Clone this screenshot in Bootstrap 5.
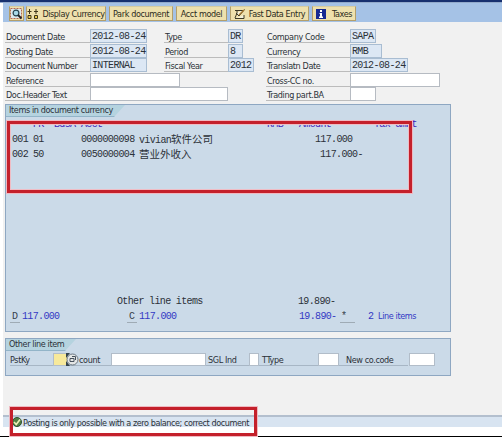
<!DOCTYPE html>
<html lang="en">
<head>
<meta charset="utf-8">
<title>Display Overview</title>
<link href="https://cdn.jsdelivr.net/npm/bootstrap@5.3.0/dist/css/bootstrap.min.css" rel="stylesheet">
<style>
body{width:502px;height:438px;overflow:hidden;background:#fff;color:#2b3138;font:9px/13px "DejaVu Sans Condensed","DejaVu Sans",Tahoma,sans-serif;font-stretch:condensed;letter-spacing:-.38px;white-space:nowrap}
svg{flex:none}
.screen{margin-left:3px;height:424px;background:#f1f1f1}
.topline{height:3px;background:#17306f;border-bottom:1px solid #93aacb}
.toolbar{height:19px;background:#a5c2e6;padding:3px 0 1px 6px}
.tool{height:15px;padding:0 3px;border:1px solid #b39f6b;border-top-color:#d6cca0;border-radius:0;background:#eee0ad;color:#2b2b20;font-size:inherit;line-height:12px;letter-spacing:inherit;margin-right:3px;display:flex;align-items:center;justify-content:center;flex:none}
.tool svg{margin-right:3px}
.pick{width:15px;padding:0;margin-right:2px}
.pick svg{margin:0}
.w-cur{width:80px;letter-spacing:-.42px}.w-park{width:64px}.w-acct{width:51px}.w-fast{width:79px}.w-tax{width:44px}
.w-tax svg{margin-right:6px}
.head-fields{padding:7px 0 0 2px}
.line{height:14.6px;display:grid;grid-template-columns:85px 74px 64px 38px 84px 1fr}
.lbl{height:14px;padding:2px 0 0 1px;border-bottom:1px solid #bcbcbc}
.fld{height:14px;background:#fff;border:1px solid #b6bbc2}
.ro{background:#dce7f4;border-color:#a9bdd2}
.mono{font-family:"Liberation Mono","Noto Sans CJK SC",monospace;font-size:10px;letter-spacing:-.65px;line-height:13px}
.ro.mono{padding-left:1px}
.w10{width:10px}.w15{width:15px}.w21{width:21px}.w26{width:26px}.w32{width:32px}.w57{width:57px}.w58{width:58px}.w90{width:90px}.w95{width:95px}.w138{width:138px}
.panel{margin-left:2px;width:446px;background:#cbdae8;border:1px solid #8ea7c2}
.caption{height:12px;line-height:11px;padding-left:3px;background:linear-gradient(#b5d3df 11px,#92b4c8 11px);clip-path:polygon(0 0,100% 0,calc(100% - 11px) 100%,0 100%)}
.items{height:228px;margin-top:2px}
.items .caption{width:119px}
.other{height:38px;margin-top:6px}
.other .caption{width:70px}
.g{display:grid}
.heads{height:12px;overflow:hidden;line-height:12px;padding-left:27px;color:#3d25b8;grid-template-columns:21px 27px 186px 32px 75px 1fr;margin:2px 0}
.entry{height:14.6px;padding-left:6px;grid-template-columns:21px 48px 58px 176px 1fr}
.entry .neg{padding-left:5px}
.han{font-family:"Noto Sans CJK SC",sans-serif;font-size:10.5px;letter-spacing:0;line-height:12px}
.olr{height:14.6px;padding-left:111px;grid-template-columns:181px 1fr;margin-top:133px}
.sums{height:14px;padding-left:4px;color:#3339c4;grid-template-columns:12px 105px 12px 160px 41px 28px 1fr}
.mark-cell{width:10px;height:13px;color:#36414b;border-bottom:1px solid #9fabb5;padding-left:2px}
.mark-cell.wide{width:15px;padding-left:1px}
.count-label{font-family:"DejaVu Sans Condensed","DejaVu Sans",sans-serif;font-size:9px;letter-spacing:-.38px}
.entryline{height:13px;margin:2px 0 0 4px;width:398px;border-bottom:1px solid #a7b6c5;grid-template-columns:43px 26px 32px 97px 41px 13px 56px 28px 63px 1fr}
.entryline>span{line-height:14px}
.inp{height:13px;background:#fff;border:1px solid #b2bdc9}
.key{background:#f7e99b}
.lookup{position:absolute;left:13px;top:0}
.status{margin-top:39px;height:12px;background:#d8e4f1;border-top:2px solid #b3bfce;padding-left:9px;line-height:12px;letter-spacing:-.43px}
.status svg{margin-right:1px}
.bottomline{height:1px;background:#000;margin-top:9px}
.callout{position:absolute;border:3px solid #c4202b;box-shadow:0 0 0 1px #efb9c1,inset 0 0 0 1px #f0bcc4;z-index:3}
.c1{left:7px;top:121px;width:405px;height:72px}
.c2{left:10px;top:407px;width:247px;height:29px;box-shadow:0 0 0 1px #efb9c1}
</style>
<script src="https://cdn.jsdelivr.net/npm/bootstrap@5.3.0/dist/js/bootstrap.bundle.min.js"></script>
</head>
<body class="position-relative">
<div class="topline"></div>
<main class="screen">
  <div class="toolbar d-flex">
    <button class="tool pick" aria-label="Choose"><svg width="13" height="12" viewBox="0 0 13 12"><rect x=".5" y=".5" width="11" height="10" fill="#dce8ee" stroke="#b5684e" stroke-dasharray="2 1"/><circle cx="6" cy="5" r="2.9" fill="#a9d8e8" stroke="#26434f" stroke-width="1.2"/><path d="M8 7l3.500 3.500" stroke="#222" stroke-width="1.8"/></svg></button>
    <button class="tool w-cur"><svg width="12" height="12" viewBox="0 0 12 12" fill="#e8c74a" stroke="#3e3519"><path d="M1 7.500h3v3H1zM7.500 7.500h3v3h-3z"/><path d="M2.500 1v5M9 1v5M.5 3.500h4M7 3.500h4" fill="none"/></svg>Display Currency</button>
    <button class="tool w-park">Park document</button>
    <button class="tool w-acct">Acct model</button>
    <button class="tool w-fast"><svg width="12" height="12" viewBox="0 0 12 12"><path d="M1 2.500h8M2 5l3 3 5.500-6.500M1 10.500h9V7M3 3v2L1 10" fill="#f5f2dc" stroke="#3c3825"/><path d="M5 7l5-5" stroke="#a77931" stroke-width="1.500"/></svg>Fast Data Entry</button>
    <button class="tool w-tax"><svg width="10" height="10" viewBox="0 0 10 10"><path d="M0 0h10v10H0z" fill="#172a91"/><path d="M4 1h2v2H4zM3.500 4H6v3.500h1V9H3V7.500h1V5h-.5z" fill="#fff"/></svg>Taxes</button>
  </div>
  <section class="head-fields">
    <div class="line"><div class="lbl">Document Date</div><div class="fld ro mono w57">2012-08-24</div><div class="lbl">Type</div><div class="fld ro mono w15">DR</div><div class="lbl">Company Code</div><div class="fld ro mono w26">SAPA</div></div>
    <div class="line"><div class="lbl">Posting Date</div><div class="fld ro mono w57">2012-08-24</div><div class="lbl">Period</div><div class="fld ro mono w15">8</div><div class="lbl">Currency</div><div class="fld ro mono w32">RMB</div></div>
    <div class="line"><div class="lbl">Document Number</div><div class="fld ro mono w57">INTERNAL</div><div class="lbl">Fiscal Year</div><div class="fld ro mono w26">2012</div><div class="lbl">Translatn Date</div><div class="fld ro mono w58">2012-08-24</div></div>
    <div class="line"><div class="lbl">Reference</div><div class="fld w90"></div><div></div><div></div><div class="lbl">Cross-CC no.</div><div class="fld w90"></div></div>
    <div class="line"><div class="lbl">Doc.Header Text</div><div class="fld w138"></div><div></div><div></div><div class="lbl">Trading part.BA</div><div class="fld w26"></div></div>
  </section>
  <section class="panel items">
    <div class="caption">Items in document currency</div>
    <div class="g heads mono"><span>PK</span><span>BusA</span><span>Acct</span><span>RMB</span><span>Amount</span><span>Tax amnt</span></div>
    <div class="g entry mono"><span>001</span><span>01</span><span>0000000098</span><span>vivian<span class="han">软件公司</span></span><span>117.000</span></div>
    <div class="g entry mono"><span>002</span><span>50</span><span>0050000004</span><span class="han">营业外收入</span><span class="neg">117.000-</span></div>
    <div class="g olr mono"><span>Other line items</span><span>19.890-</span></div>
    <div class="g sums mono"><span class="mark-cell">D</span><span>117.000</span><span class="mark-cell">C</span><span>117.000</span><span>19.890-</span><span class="mark-cell wide">*</span><span class="d-flex"><span class="w10">2</span><span class="count-label">Line items</span></span></div>
  </section>
  <section class="panel other">
    <div class="caption">Other line item</div>
    <div class="g entryline"><span>PstKy</span><div class="position-relative"><div class="inp key w15"></div><svg class="lookup" width="13" height="13" viewBox="0 0 13 13"><path d="M0 0h4L0 5zM0 13h4L0 8z" fill="#34434c"/><circle cx="6.500" cy="6.500" r="5.500" fill="#e4e6e6" stroke="#6b7680"/><path d="M4 5.500h4v3H4zM6 3.500h3.500V7" fill="none" stroke="#46515c"/></svg></div><span>count</span><div class="inp w95"></div><span>SGL Ind</span><div class="inp w10"></div><span>TType</span><div class="inp w21"></div><span>New co.code</span><div class="inp w26"></div></div>
  </section>
  <footer class="status d-flex"><svg width="10" height="10" viewBox="0 0 10 10"><circle cx="5" cy="5" r="4.500" fill="#528044" stroke="#304f31"/><path d="M2 5l2.200 2.500L8 2.500" fill="none" stroke="#eef2b5" stroke-width="1.600"/></svg><span>Posting is only possible with a zero balance; correct document</span></footer>
</main>
<div class="bottomline"></div>
<div class="callout c1"></div>
<div class="callout c2"></div>
</body>
</html>
